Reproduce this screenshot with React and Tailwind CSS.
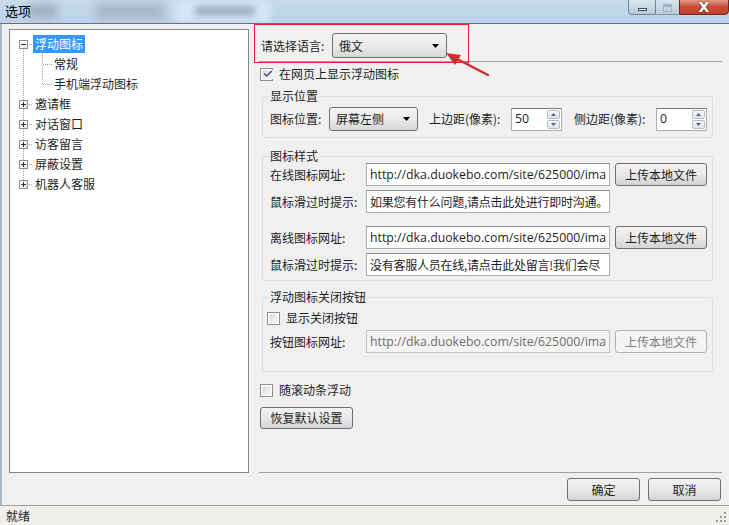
import { Check } from "lucide-react";

const url = "http://dka.duokebo.com/site/625000/ima";

function Checkbox({ checked }) {
    return (
        <span className="w-[13px] h-[13px] border border-[#8e8f8f] bg-white p-[1px] flex shrink-0">
            <span className="flex-1 bg-linear-to-br from-[#d8d8d8] to-[#fbfbfb] border border-[#ececec] flex items-center justify-center">
                {checked && <Check size={10} strokeWidth={3.5} className="text-[#3b4f8a]" />}
            </span>
        </span>
    );
}

function Arrow() {
    return (
        <svg width="7" height="4" viewBox="0 0 7 4" className="shrink-0">
            <path d="M0 0h7L3.5 4z" fill="#000" />
        </svg>
    );
}

function Select({ value, className }) {
    return (
        <div className={`flex items-center border border-[#707070] rounded-[3px] bg-linear-to-b from-[#f3f3f3] via-[#ebebeb] to-[#d8d8d8] pl-[6px] pr-[7px] ${className}`}>
            <span className="flex-1">{value}</span>
            <Arrow />
        </div>
    );
}

function Spin({ value }) {
    return (
        <div className="w-[51px] h-[23px] border border-[#abadb3] border-t-[#7a7a7a] bg-white flex items-center">
            <span className="flex-1 pl-[3px] font-['Open_Sans',sans-serif] text-[12.3px]">{value}</span>
            <div className="w-[15px] h-full flex flex-col gap-[1px] p-[1px]">
                <div className="flex-1 border border-[#b6bcc6] rounded-[2px] bg-linear-to-b from-[#f6f8fa] to-[#dfe5ec] flex items-center justify-center">
                    <svg width="5" height="3" viewBox="0 0 5 3"><path d="M0 3h5L2.5 0z" fill="#4d6185" /></svg>
                </div>
                <div className="flex-1 border border-[#b6bcc6] rounded-[2px] bg-linear-to-b from-[#f6f8fa] to-[#dfe5ec] flex items-center justify-center">
                    <svg width="5" height="3" viewBox="0 0 5 3"><path d="M0 0h5L2.5 3z" fill="#4d6185" /></svg>
                </div>
            </div>
        </div>
    );
}

function TextBox({ value, disabled, latin }) {
    return (
        <div className={`w-[244px] h-[23px] border flex items-center overflow-hidden whitespace-nowrap pl-[3px] ${disabled ? "border-[#c0c0c0] bg-[#f4f4f4] text-[#6d6d6d]" : "border-[#abadb3] border-t-[#8e8f8f] bg-white"} ${latin ? "font-['Open_Sans',sans-serif] text-[12.3px]" : "tracking-[-0.25px]"}`}>
            {value}
        </div>
    );
}

function Button({ children, disabled, className }) {
    return (
        <div className={`h-[23px] rounded-[3px] border flex items-center justify-center ${disabled ? "border-[#adb2b5] bg-[#f4f4f4] text-[#838383]" : "border-[#707070] bg-linear-to-b from-[#f3f3f3] via-[#e8e8e8] to-[#d4d4d4]"} ${className}`}>
            {children}
        </div>
    );
}

function Group({ title, children, className }) {
    return (
        <fieldset className={`ml-[10px] w-[451px] border border-[#d5dfe5] rounded-[3px] ${className}`}>
            <legend className="ml-[6px] px-[1px] leading-[14px]">{title}</legend>
            {children}
        </fieldset>
    );
}

function ExpandBox({ open }) {
    return (
        <span className="relative w-[9px] h-[9px] border border-[#919191] bg-linear-to-br from-white to-[#e6e6e6] shrink-0">
            <span className="absolute left-[1px] top-[3px] w-[5px] h-[1px] bg-[#333]" />
            {!open && <span className="absolute left-[3px] top-[1px] w-[1px] h-[5px] bg-[#333]" />}
        </span>
    );
}

function Tree() {
    const roots = ["邀请框", "对话窗口", "访客留言", "屏蔽设置", "机器人客服"];
    return (
        <div className="relative w-[240px] h-[444px] border border-[#828790] bg-white pt-[4px]">
            <svg className="absolute left-0 top-0" width="238" height="200">
                <g stroke="#a0a0a0" strokeDasharray="1 1" strokeWidth="1">
                    <line x1="13.5" y1="19" x2="13.5" y2="150" />
                    <line x1="32.5" y1="23" x2="32.5" y2="55" />
                    <line x1="33" y1="34.5" x2="42" y2="34.5" />
                    <line x1="33" y1="54.5" x2="42" y2="54.5" />
                    {[14, 74, 94, 114, 134, 154].map((y) => (
                        <line key={y} x1="19" y1={y + 0.5} x2="23" y2={y + 0.5} />
                    ))}
                </g>
            </svg>
            <div className="relative h-[20px] flex items-center pl-[9px]">
                <ExpandBox open />
                <span className="ml-[5px] px-[2px] h-[18px] flex items-center bg-[#3399ff] text-white">浮动图标</span>
            </div>
            {["常规", "手机端浮动图标"].map((t) => (
                <div key={t} className="relative h-[20px] flex items-center pl-[42px]">
                    <span className="px-[2px]">{t}</span>
                </div>
            ))}
            {roots.map((t) => (
                <div key={t} className="relative h-[20px] flex items-center pl-[9px]">
                    <ExpandBox />
                    <span className="ml-[5px] px-[2px]">{t}</span>
                </div>
            ))}
        </div>
    );
}

function TitleBar() {
    return (
        <div className="relative h-[24px] overflow-hidden bg-linear-to-b from-[#c8dbee] to-[#bcd2ea] border-b border-[#5f7286]">
            <div className="absolute left-[28px] top-[4px] w-[30px] h-[14px] bg-[#9fb0c2] blur-[4px]" />
            <div className="absolute left-[95px] top-[3px] w-[70px] h-[16px] bg-[#a7b8c9] blur-[4px]" />
            <div className="absolute left-[175px] top-[0px] w-[95px] h-[22px] bg-[#d5e6f8] blur-[3px]" />
            <div className="absolute left-[195px] top-[6px] w-[60px] h-[10px] bg-[#9fb1c4] blur-[3px]" />
            <span className="absolute left-[5px] top-[3px] text-[13px] leading-[16px] text-black">选项</span>
            <div className="absolute right-0 top-[-2px] flex">
                <div className="w-[28px] h-[17px] border border-[#6f8294] rounded-bl-[4px] bg-linear-to-b from-[#dfe8f2] to-[#b9c9da] flex items-center justify-center">
                    <span className="mt-[5px] w-[9px] h-[3px] bg-white border border-[#3d4b5c]" />
                </div>
                <div className="w-[23px] h-[17px] border-y border-[#6f8294] bg-linear-to-b from-[#dfe8f2] to-[#b9c9da] flex items-center justify-center opacity-80">
                    <span className="mt-[2px] w-[9px] h-[8px] border border-[#9aa7b5] border-t-[3px]" />
                </div>
                <div className="w-[50px] h-[17px] border border-[#6b2a22] rounded-br-[4px] bg-linear-to-b from-[#e8a595] via-[#c9503c] to-[#c33e28] flex items-center justify-center">
                    <span className="mt-[1px] text-white text-[14px] leading-[14px] font-bold font-['DejaVu_Sans',sans-serif] [text-shadow:0_0_2px_#3a1a14]">X</span>
                </div>
            </div>
        </div>
    );
}

export default function App() {
    return (
        <div className="relative w-[729px] h-[525px] overflow-hidden bg-[#f0f0f0] text-[12px] leading-[14px] text-[#1e1e1e] font-['Noto_Sans_CJK_SC',sans-serif]">
            <TitleBar />
            <div className="flex h-[481px] border-l-2 border-[#a9bccf]">
                <div className="pl-[7px] pt-[5px]">
                    <Tree />
                </div>
                <div className="ml-[3px] flex-1 flex flex-col">
                    <div className="mt-[9px] flex items-center h-[25px] pl-[9px]">
                        <span className="w-[71px]">请选择语言:</span>
                        <Select value="俄文" className="w-[115px] h-[25px]" />
                    </div>
                    <div className="mt-[3px] ml-[7px] w-[463px] border-t border-[#a0a0a0]" />
                    <div className="mt-[5px] ml-[8px] flex items-center h-[14px]">
                        <Checkbox checked />
                        <span className="ml-[6px]">在网页上显示浮动图标</span>
                    </div>
                    <Group title="显示位置" className="mt-[8px]">
                        <div className="pl-[7px] pt-[4px] pb-[6px] flex items-center">
                            <span className="w-[59px]">图标位置:</span>
                            <Select value="屏幕左侧" className="w-[89px] h-[24px]" />
                            <span className="ml-[11px] w-[82px]">上边距(像素):</span>
                            <Spin value="50" />
                            <span className="ml-[12px] w-[82px]">侧边距(像素):</span>
                            <Spin value="0" />
                        </div>
                    </Group>
                    <Group title="图标样式" className="mt-[11px]">
                        <div className="pl-[7px] pb-[4px] flex flex-col">
                            <div className="flex items-center">
                                <span className="w-[96px]">在线图标网址:</span>
                                <TextBox value={url} latin />
                                <Button className="ml-[5px] w-[92px]">上传本地文件</Button>
                            </div>
                            <div className="mt-[4px] flex items-center">
                                <span className="w-[96px]">鼠标滑过时提示:</span>
                                <TextBox value="如果您有什么问题,请点击此处进行即时沟通。" />
                            </div>
                            <div className="mt-[13px] flex items-center">
                                <span className="w-[96px]">离线图标网址:</span>
                                <TextBox value={url} latin />
                                <Button className="ml-[5px] w-[92px]">上传本地文件</Button>
                            </div>
                            <div className="mt-[4px] flex items-center">
                                <span className="w-[96px]">鼠标滑过时提示:</span>
                                <TextBox value="没有客服人员在线,请点击此处留言!我们会尽" />
                            </div>
                        </div>
                    </Group>
                    <Group title="浮动图标关闭按钮" className="mt-[9px]">
                        <div className="pt-[7px] pb-[18px] flex flex-col">
                            <div className="ml-[4px] flex items-center h-[14px]">
                                <Checkbox />
                                <span className="ml-[6px]">显示关闭按钮</span>
                            </div>
                            <div className="mt-[5px] pl-[7px] flex items-center">
                                <span className="w-[96px]">按钮图标网址:</span>
                                <TextBox value={url} latin disabled />
                                <Button disabled className="ml-[5px] w-[92px]">上传本地文件</Button>
                            </div>
                        </div>
                    </Group>
                    <div className="mt-[11px] ml-[8px] flex items-center h-[14px]">
                        <Checkbox />
                        <span className="ml-[6px]">随滚动条浮动</span>
                    </div>
                    <Button className="mt-[10px] ml-[8px] w-[93px] !h-[22px]">恢复默认设置</Button>
                    <div className="flex-1" />
                    <div className="ml-[7px] w-[463px] border-t border-[#a0a0a0]" />
                    <div className="mt-[5px] mb-[4px] flex justify-end pr-[8px] gap-[8px]">
                        <Button className="w-[73px]">确定</Button>
                        <Button className="w-[73px]">取消</Button>
                    </div>
                </div>
            </div>
            <div className="h-[20px] border-t border-[#a0a0a0] bg-[#f0eeeb] flex items-center pl-[6px] relative">
                <span>就绪</span>
                <svg className="absolute right-[2px] bottom-[2px]" width="11" height="11" viewBox="0 0 11 11">
                    <g fill="#9a9a9a">
                        <rect x="8" y="0" width="2" height="2" />
                        <rect x="4" y="4" width="2" height="2" />
                        <rect x="8" y="4" width="2" height="2" />
                        <rect x="0" y="8" width="2" height="2" />
                        <rect x="4" y="8" width="2" height="2" />
                        <rect x="8" y="8" width="2" height="2" />
                    </g>
                </svg>
            </div>
            <div className="absolute left-[254px] top-[24px] w-[215px] h-[39px] border border-[#e0262b] pointer-events-none" />
            <svg className="absolute left-[440px] top-[45px] pointer-events-none" width="55" height="35" viewBox="440 45 55 35">
                <line x1="488" y1="75" x2="457" y2="59" stroke="#d42a2a" strokeWidth="2.5" strokeLinecap="round" />
                <polygon points="446,53 461,55 455,65" fill="#d42a2a" />
            </svg>
        </div>
    );
}
